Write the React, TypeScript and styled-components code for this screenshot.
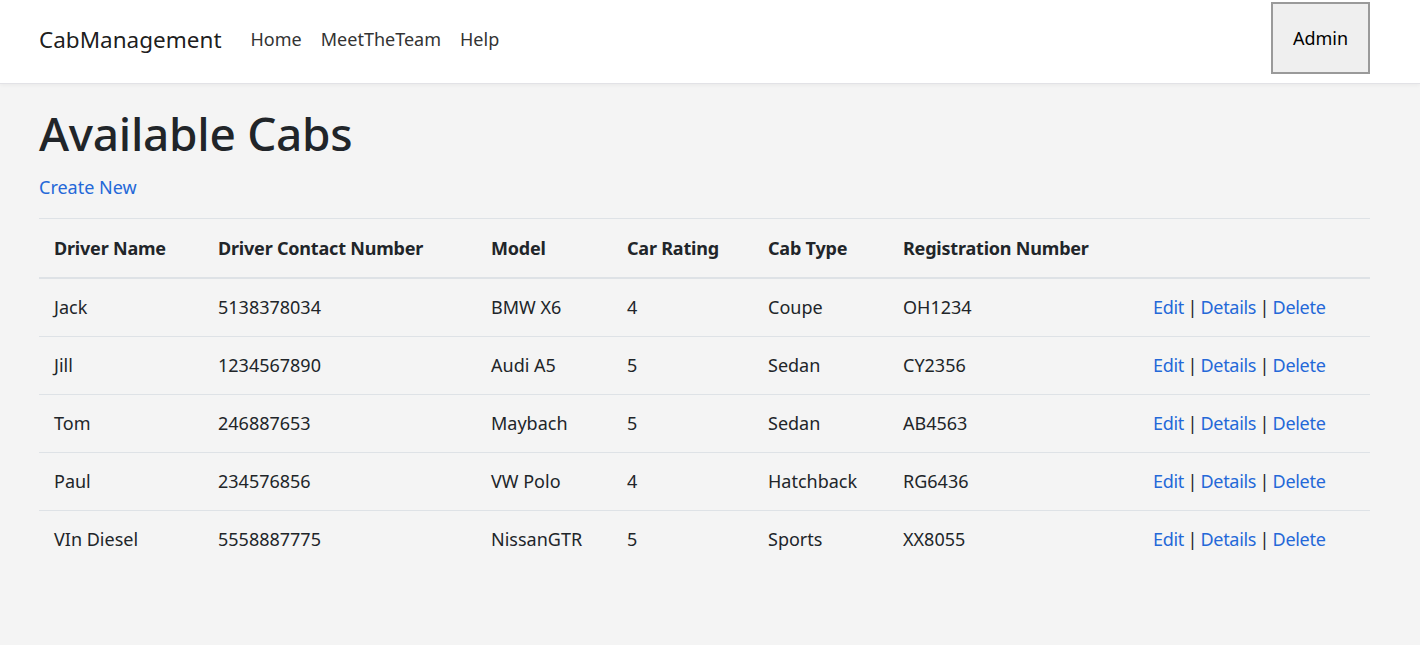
import React from "react";
import styled, { createGlobalStyle } from "styled-components";

const GlobalStyle = createGlobalStyle`
  html, body { margin: 0; padding: 0; }
  body {
    background: #f4f4f4;
    font-family: "Noto Sans", "Open Sans", sans-serif;
    color: #212529;
    font-size: 18px;
    line-height: 1.5;
  }
`;

const Navbar = styled.header`
  background: #ffffff;
  height: 84px;
  box-sizing: border-box;
  border-bottom: 1px solid #e2e2e6;
  box-shadow: 0 1px 4px rgba(0, 0, 0, 0.05);
  display: flex;
  align-items: center;
  padding: 0 50px 0 39px;
`;

const Brand = styled.a`
  font-size: 22.5px;
  color: rgba(0, 0, 0, 0.9);
  text-decoration: none;
  margin-right: 29px;
  margin-top: -4px;
`;

const NavLinks = styled.nav`
  display: flex;
  gap: 19px;
  flex: 1;
  margin-top: -4px;
`;

const NavLink = styled.a`
  font-size: 18px;
  color: #333;
  text-decoration: none;
`;

const AdminButton = styled.button`
  width: 99px;
  height: 72px;
  margin-top: -7px;
  background: #efefef;
  border: 2px solid #9a9a9a;
  font-family: inherit;
  font-size: 18px;
  color: #000;
  padding: 0;
`;

const Main = styled.main`
  padding: 22px 50px 0 39px;
`;

const Title = styled.h1`
  font-size: 46px;
  font-weight: 500;
  line-height: 1.2;
  margin: 0 0 13px;
  letter-spacing: -0.3px;
`;

const Link = styled.a`
  color: #2468d8;
  text-decoration: none;
`;

const CreateRow = styled.p`
  margin: 0 0 17px;
`;

const Table = styled.table`
  width: 100%;
  border-collapse: collapse;
  table-layout: fixed;
`;

const Th = styled.th<{ $w?: number }>`
  box-sizing: border-box;
  ${(p) => (p.$w ? `width: ${p.$w}px;` : "")}
  text-align: left;
  font-weight: 700;
  padding: 16px 15px 15px;
  border-top: 1px solid #dee2e6;
  border-bottom: 2px solid #dee2e6;
  white-space: nowrap;
  letter-spacing: -0.2px;
`;

const Td = styled.td`
  padding: 15px 15px;
  white-space: nowrap;
`;

const ActionsTd = styled(Td)`
  letter-spacing: -0.3px;
  word-spacing: -1px;
`;

const Tr = styled.tr<{ $last?: boolean }>`
  & > td { border-bottom: ${(p) => (p.$last ? "none" : "1px solid #dee2e6")}; }
`;

const Sep = styled.span`
  color: #212529;
`;

const cabs = [
  ["Jack", "5138378034", "BMW X6", "4", "Coupe", "OH1234"],
  ["Jill", "1234567890", "Audi A5", "5", "Sedan", "CY2356"],
  ["Tom", "246887653", "Maybach", "5", "Sedan", "AB4563"],
  ["Paul", "234576856", "VW Polo", "4", "Hatchback", "RG6436"],
  ["VIn Diesel", "5558887775", "NissanGTR", "5", "Sports", "XX8055"],
];

export default function App() {
  return (
    <>
      <GlobalStyle />
      <Navbar>
        <Brand href="#">CabManagement</Brand>
        <NavLinks>
          <NavLink href="#">Home</NavLink>
          <NavLink href="#">MeetTheTeam</NavLink>
          <NavLink href="#">Help</NavLink>
        </NavLinks>
        <AdminButton>Admin</AdminButton>
      </Navbar>
      <Main>
        <Title>Available Cabs</Title>
        <CreateRow>
          <Link href="#">Create New</Link>
        </CreateRow>
        <Table>
          <thead>
            <tr>
              <Th $w={164}>Driver Name</Th>
              <Th $w={273}>Driver Contact Number</Th>
              <Th $w={136}>Model</Th>
              <Th $w={141}>Car Rating</Th>
              <Th $w={135}>Cab Type</Th>
              <Th $w={250}>Registration Number</Th>
              <Th></Th>
            </tr>
          </thead>
          <tbody>
            {cabs.map((c, i) => (
              <Tr key={i} $last={i === cabs.length - 1}>
                {c.map((v, j) => (
                  <Td key={j}>{v}</Td>
                ))}
                <ActionsTd>
                  <Link href="#">Edit</Link> <Sep>|</Sep>{" "}
                  <Link href="#">Details</Link> <Sep>|</Sep>{" "}
                  <Link href="#">Delete</Link>
                </ActionsTd>
              </Tr>
            ))}
          </tbody>
        </Table>
      </Main>
    </>
  );
}
